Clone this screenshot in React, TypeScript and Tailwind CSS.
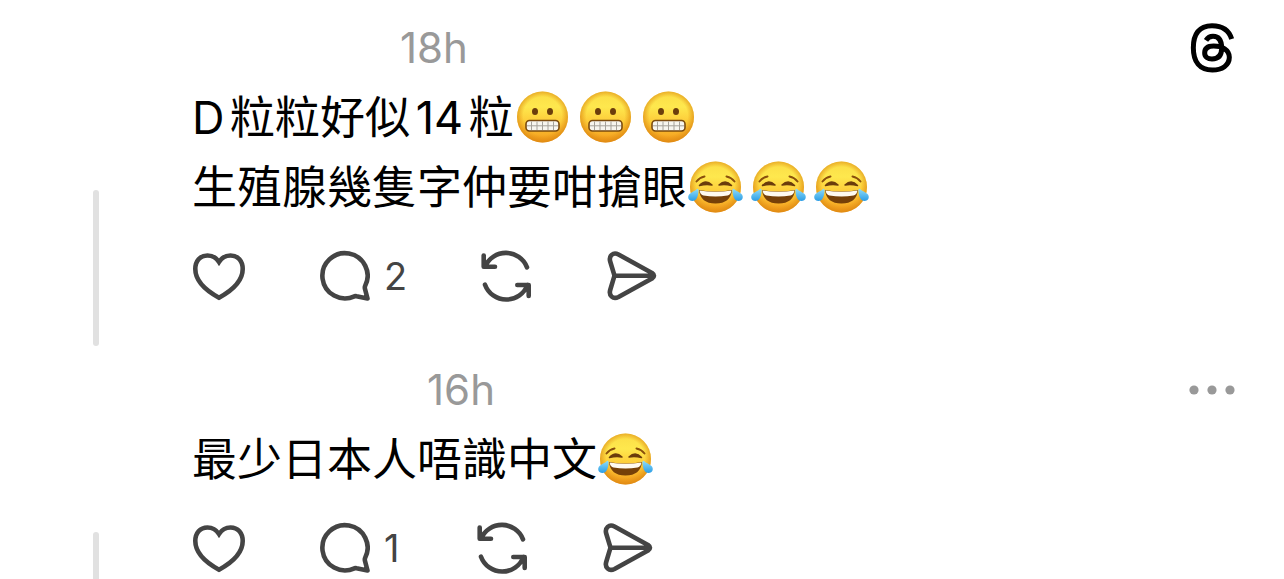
import React from 'react';

type EmojiName = "grimace" | "joy";

type Post = {
    id: number;
    age: string;
    nameWidth: string;
    lines: { text: string; emojis: EmojiName[] }[];
    replies: number;
};

const posts: Post[] = [
    {
        id: 1,
        age: "18h",
        nameWidth: "w-[208px]",
        lines: [
            { text: "D粒粒好似14粒", emojis: ["grimace", "grimace", "grimace"] },
            { text: "生殖腺幾隻字仲要咁搶眼", emojis: ["joy", "joy", "joy"] },
        ],
        replies: 2,
    },
    {
        id: 2,
        age: "16h",
        nameWidth: "w-[235px]",
        lines: [{ text: "最少日本人唔識中文", emojis: ["joy"] }],
        replies: 1,
    },
];

const EmojiDefs = () => (
    <svg className="absolute h-0 w-0" aria-hidden="true">
        <defs>
            <linearGradient id="face" x1="0" y1="0" x2="0" y2="1">
                <stop offset="0" stopColor="#fbdc45" />
                <stop offset="0.3" stopColor="#fee84e" />
                <stop offset="0.6" stopColor="#fdcb38" />
                <stop offset="1" stopColor="#f39a1b" />
            </linearGradient>
            <radialGradient id="shade" cx="0.5" cy="0.48" r="0.52">
                <stop offset="0.72" stopColor="#e08a10" stopOpacity="0" />
                <stop offset="1" stopColor="#d98510" stopOpacity="0.75" />
            </radialGradient>
            <linearGradient id="tear" x1="0" y1="0" x2="0" y2="1">
                <stop offset="0" stopColor="#8fdcf8" />
                <stop offset="1" stopColor="#2b9de6" />
            </linearGradient>
        </defs>
    </svg>
);

const Emoji = ({ name }: { name: EmojiName }) => (
    <svg viewBox="0 0 63 56" className="h-14 w-[63px] shrink-0" role="img" aria-label={name}>
        <circle cx="31.5" cy="27" r="25.5" fill="url(#face)" />
        <circle cx="31.5" cy="27" r="25.5" fill="url(#shade)" />
        {name === "grimace" ? (
            <>
                <ellipse cx="24" cy="21.5" rx="3" ry="3.6" fill="#6b3d0c" />
                <ellipse cx="39" cy="21.5" rx="3" ry="3.6" fill="#6b3d0c" />
                <rect x="15" y="30.5" width="33" height="10.5" rx="3.5" fill="#f7f5ef" stroke="#7a4a0e" strokeWidth="1.6" />
                <path d="M16 35.8H47M20.5 31.5V40M26 31.5V40M31.5 31.5V40M37 31.5V40M42.5 31.5V40" stroke="#a5a19a" strokeWidth="1" />
            </>
        ) : (
            <>
                <path d="M12.5 21.5Q15.5 17.5 20.5 16.5M50.5 21.5Q47.5 17.5 42.5 16.5" fill="none" stroke="#8a4f0c" strokeWidth="2" strokeLinecap="round" />
                <path d="M15.5 25.5Q21.5 19 28 25Q22 24 15.5 25.5ZM35 25Q41.5 19 47.5 25.5Q41 24 35 25Z" fill="#6b3d0c" stroke="#6b3d0c" strokeWidth="1.5" strokeLinejoin="round" />
                <path d="M15 30Q31.5 33 48 30Q46.5 43.5 31.5 43.5Q16.5 43.5 15 30Z" fill="#764008" />
                <path d="M15.5 30.5Q31.5 33 47.5 30.5Q46.5 35 43.5 35.5Q31.5 37.5 19.5 35.5Q16.5 35 15.5 30.5Z" fill="#fffaf0" />
                <path d="M13 29C14 28.5 14.7 29.5 14.5 31C14.2 36.5 12.5 41 8.5 41C4.2 41 3 36.5 5.5 34C7.5 32 10.8 31.2 13 29Z" fill="url(#tear)" />
                <path d="M50 29C49 28.5 48.3 29.5 48.5 31C48.8 36.5 50.5 41 54.5 41C58.8 41 60 36.5 57.5 34C55.5 32 52.2 31.2 50 29Z" fill="url(#tear)" />
            </>
        )}
    </svg>
);

const iconProps = {
    fill: "none",
    stroke: "currentColor",
    strokeWidth: 4.6,
    strokeLinecap: "round",
    strokeLinejoin: "round",
} as const;

const HeartIcon = () => (
    <svg viewBox="0 0 54 56" className="h-14 w-[54px]" {...iconProps} strokeLinejoin="miter">
        <path d="M27 14C24 9.5 19.5 7.5 15.5 7.5C8 7.5 3.3 13 3.3 21C3.3 32 12 41.5 27 49.7C42 41.5 50.7 32 50.7 21C50.7 13 46 7.5 38.5 7.5C34.5 7.5 30 9.5 27 14Z" />
    </svg>
);

const ReplyIcon = () => (
    <svg viewBox="0 0 50 56" className="h-14 w-[50px]" {...iconProps}>
        <path d="M34.5 48.3A22.6 22.6 0 1 1 45 38.3Q44.6 39.4 45 41L47.5 50.5L36.5 48.3Q35.5 48 34.5 48.3Z" />
    </svg>
);

const RepostIcon = () => (
    <svg viewBox="0 0 52 56" className="h-14 w-[52px]" {...iconProps}>
        <path d="M2.7 7.5V18.7H14M4 18.7A22.7 22.7 0 0 1 46 19.3M4 36.7A22.7 22.7 0 0 0 46.5 37M36.3 37H47.7V48" />
    </svg>
);

const SendIcon = () => (
    <svg viewBox="0 0 50 56" className="h-14 w-[50px]" {...iconProps}>
        <path d="M7.5 27.7L3.2 13.5C1.6 8 6 3.6 11.5 6.5L45 25Q49 27.7 45 30.5L11.5 49C6 51.8 1.6 47.5 3.2 42ZM7.5 27.7H46" />
    </svg>
);

const ThreadsLogo = () => (
    <svg viewBox="56 36 138 156" className="h-13 w-[46px]" fill="none" stroke="currentColor" strokeWidth="15">
        <path d="M184 87C176 60 155 47 125 47C86 47 69 73 69 113C69 156 88 180 126 180C155 180 177 166 177 142C177 119 155 108 130 108C113 108 103 115 103 129C103 141 113 147 125 147C143 147 154 137 154 115C154 92 146 79 128 79C118 79 112 83 107 91" />
    </svg>
);

const MoreIcon = () => (
    <svg viewBox="0 0 46 10" className="h-2.5 w-[46px]" fill="currentColor">
        <circle cx="5" cy="5" r="4.6" />
        <circle cx="23" cy="5" r="4.6" />
        <circle cx="41" cy="5" r="4.6" />
    </svg>
);

const PostItem = ({ post, isFirst }: { post: Post; isFirst: boolean }) => (
    <article className="flex">
        <div className="-mb-1 flex w-48 shrink-0 pt-[190px] pl-[93px]">
            <div className="w-1.5 rounded-full bg-[#e1e1e1]" />
        </div>
        <div className="min-w-0 grow pt-[22px] pb-[38px]">
            <header className="flex h-13 items-center justify-between pr-[49px]">
                <div className="flex items-center">
                    <span className={post.nameWidth} />
                    <time className="text-[42px] leading-none text-[#999999]">{post.age}</time>
                </div>
                {isFirst ? (
                    <a href="#" aria-label="Threads" className="text-black"><ThreadsLogo /></a>
                ) : (
                    <button type="button" aria-label="More" className="text-[#999999]"><MoreIcon /></button>
                )}
            </header>
            <div className="mt-[9px]">
                {post.lines.map((line) => (
                    <p key={line.text} className="flex h-[70px] items-center text-[45px] leading-[70px] whitespace-nowrap text-black [text-autospace:normal]">
                        <span>{line.text}</span>
                        <span className="-ml-[3px] flex">
                            {line.emojis.map((name, i) => <Emoji key={i} name={name} />)}
                        </span>
                    </p>
                ))}
            </div>
            <div className="mt-[25px] flex h-14 items-center gap-[74px] text-[#444444]">
                <button type="button" aria-label="Like"><HeartIcon /></button>
                <button type="button" aria-label="Reply" className="flex items-center gap-3.5">
                    <ReplyIcon />
                    <span className="min-w-[19px] text-left text-[38px] leading-none">{post.replies}</span>
                </button>
                <button type="button" aria-label="Repost"><RepostIcon /></button>
                <button type="button" aria-label="Share"><SendIcon /></button>
            </div>
        </div>
    </article>
);

export default function App() {
    return (
        <main className="h-screen overflow-hidden bg-white font-[Inter,'Noto_Sans_CJK_TC',sans-serif]">
            <EmojiDefs />
            {posts.map((post, i) => <PostItem key={post.id} post={post} isFirst={i === 0} />)}
        </main>
    );
}
